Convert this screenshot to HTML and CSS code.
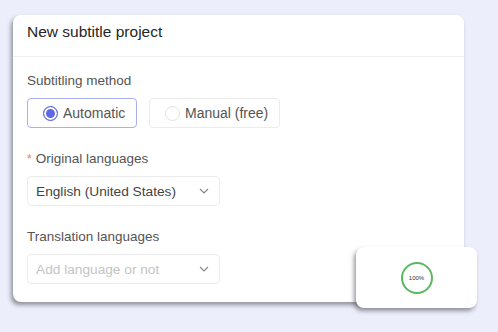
FILE: index.html
```html
<!DOCTYPE html>
<html lang="en">

<head>
    <meta charset="UTF-8">
    <meta name="viewport" content="width=device-width, initial-scale=1.0">
    <title>New subtitle project</title>
    <link rel="stylesheet" href="styles.css">
</head>

<body>
    <div class="dialog">
        <div class="dialog-header">New subtitle project</div>

        <div class="dialog-body">
            <div class="field">
                <div class="field-label">Subtitling method</div>
                <div class="radio-group">
                    <label class="radio-option checked">
                        <span class="radio-dot"></span>
                        Automatic
                    </label>
                    <label class="radio-option">
                        <span class="radio-dot"></span>
                        Manual (free)
                    </label>
                </div>
            </div>

            <div class="field">
                <div class="field-label"><span class="required">*</span>Original languages</div>
                <div class="select">
                    <span>English (United States)</span>
                    <svg class="chevron" width="10" height="6" viewBox="0 0 10 6">
                        <path d="M1 1l4 4 4-4" fill="none" stroke="#888" stroke-width="1.2" />
                    </svg>
                </div>
            </div>

            <div class="field">
                <div class="field-label">Translation languages</div>
                <div class="select placeholder">
                    <span>Add language or not</span>
                    <svg class="chevron" width="10" height="6" viewBox="0 0 10 6">
                        <path d="M1 1l4 4 4-4" fill="none" stroke="#888" stroke-width="1.2" />
                    </svg>
                </div>
            </div>
        </div>
    </div>

    <div class="progress-toast">
        <div class="progress-ring">100%</div>
    </div>
</body>

</html>
```

FILE: styles.css
```css
body {
    font-family: "Liberation Sans", Arial, sans-serif;
    margin: 0;
    padding: 15px 0 0 13px;
    background-color: #eceefb;
    width: 498px;
    height: 332px;
    box-sizing: border-box;
    position: relative;
    overflow: hidden;
}

.dialog {
    width: 451px;
    height: 287px;
    background-color: white;
    border-radius: 8px;
    box-shadow: -2px 3px 4px rgba(70, 70, 80, 0.55);
    box-sizing: border-box;
}

.dialog-header {
    height: 42px;
    padding: 0 14px 8px;
    display: flex;
    align-items: center;
    font-size: 15.5px;
    color: #262626;
    border-bottom: 1px solid #f0f0f0;
    box-sizing: border-box;
}

.dialog-body {
    padding: 14px 14px 0;
    display: flex;
    flex-direction: column;
    gap: 21px;
}

.field-label {
    font-size: 13.5px;
    line-height: 20px;
    color: #555;
    margin-bottom: 7px;
}

.required {
    color: #ed7b62;
    margin-right: 4px;
    font-size: 12px;
}

.radio-group {
    display: flex;
    gap: 12px;
}

.radio-option {
    height: 30px;
    display: flex;
    align-items: center;
    gap: 5px;
    padding: 0 0 0 15px;
    border: 1px solid #ececec;
    border-radius: 4px;
    font-size: 14px;
    color: #555;
    white-space: nowrap;
    box-sizing: border-box;
}

.radio-option:first-child {
    width: 110px;
}

.radio-option:last-child {
    width: 131px;
}

.radio-option.checked {
    border-color: #a8aff0;
}

.radio-dot {
    width: 15px;
    height: 15px;
    border-radius: 50%;
    border: 1px solid #e2e2e2;
    box-sizing: border-box;
    flex-shrink: 0;
}

.checked .radio-dot {
    border-color: #5f67e8;
    background-color: #5f67e8;
    box-shadow: inset 0 0 0 2px white;
}

.select {
    width: 193px;
    height: 30px;
    border: 1px solid #ececec;
    border-radius: 4px;
    display: flex;
    align-items: center;
    justify-content: space-between;
    padding: 0 10px 0 8px;
    box-sizing: border-box;
    font-size: 13.7px;
    color: #444;
}

.select.placeholder {
    color: #c4c4c4;
}

.progress-toast {
    position: absolute;
    left: 356px;
    top: 247px;
    width: 121px;
    height: 61px;
    background-color: white;
    border-radius: 8px;
    box-shadow: -2px 3px 4px rgba(70, 70, 80, 0.55);
    display: flex;
    align-items: center;
    justify-content: center;
}

.progress-ring {
    width: 32px;
    height: 32px;
    border: 2px solid #5cb860;
    border-radius: 50%;
    box-sizing: border-box;
    display: flex;
    align-items: center;
    justify-content: center;
    font-size: 6px;
    color: #333;
    margin-top: 1px;
}
```
